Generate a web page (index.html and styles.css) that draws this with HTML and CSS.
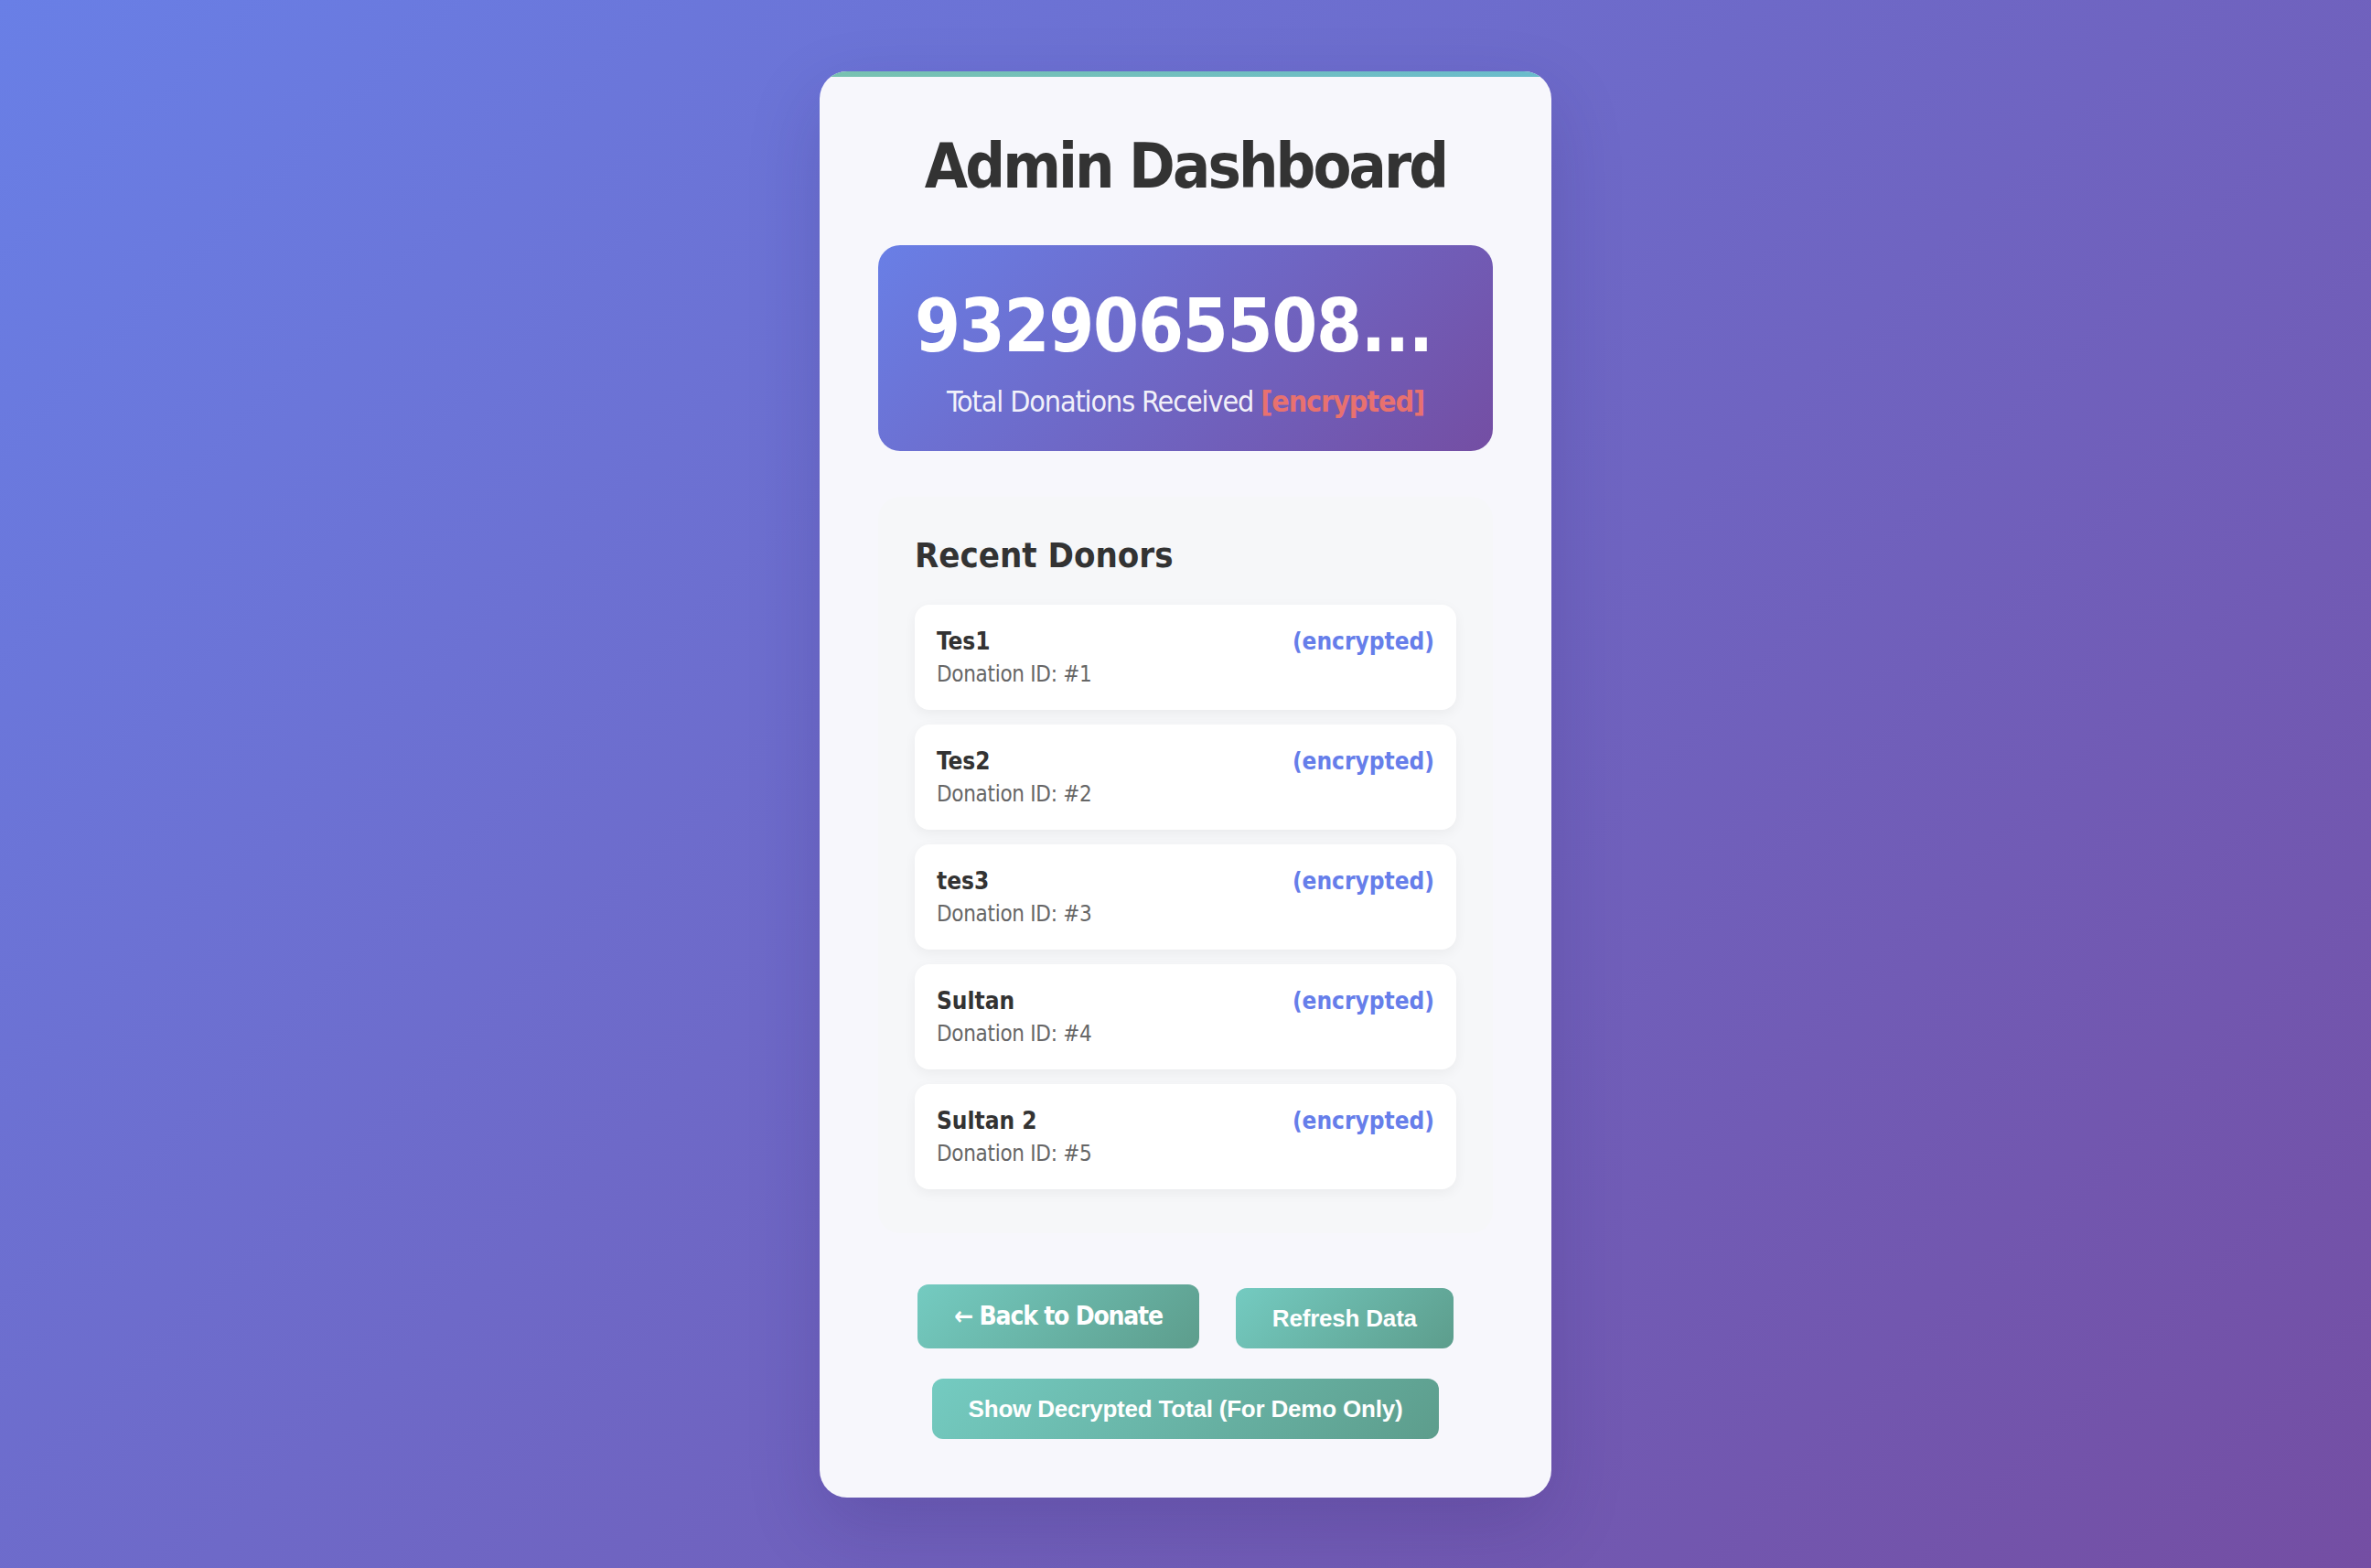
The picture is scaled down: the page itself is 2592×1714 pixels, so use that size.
FILE: index.html
```html
<!DOCTYPE html>
<html lang="en">
<head>
<meta charset="utf-8">
<title>Admin Dashboard</title>
<link rel="stylesheet" href="styles.css">
</head>
<body>
<main class="card">
  <h1 class="title">Admin Dashboard</h1>
  <section class="total">
    <div class="total-value">9329065508...</div>
    <div class="total-label">Total Donations Received <span class="enc">[encrypted]</span></div>
  </section>
  <section class="donors">
    <h3 class="donors-title">Recent Donors</h3>
    <div class="donor">
      <div class="donor-info"><div class="donor-name">Tes1</div><div class="donor-id">Donation ID: #1</div></div>
      <div class="donor-amount">(encrypted)</div>
    </div>
    <div class="donor">
      <div class="donor-info"><div class="donor-name">Tes2</div><div class="donor-id">Donation ID: #2</div></div>
      <div class="donor-amount">(encrypted)</div>
    </div>
    <div class="donor">
      <div class="donor-info"><div class="donor-name">tes3</div><div class="donor-id">Donation ID: #3</div></div>
      <div class="donor-amount">(encrypted)</div>
    </div>
    <div class="donor">
      <div class="donor-info"><div class="donor-name">Sultan</div><div class="donor-id">Donation ID: #4</div></div>
      <div class="donor-amount">(encrypted)</div>
    </div>
    <div class="donor">
      <div class="donor-info"><div class="donor-name">Sultan 2</div><div class="donor-id">Donation ID: #5</div></div>
      <div class="donor-amount">(encrypted)</div>
    </div>
  </section>
  <div class="actions">
    <a class="btn btn-link" href="#">← Back to Donate</a>
    <button class="btn btn-button" type="button">Refresh Data</button>
  </div>
  <div class="actions-second">
    <button class="btn btn-button" type="button">Show Decrypted Total (For Demo Only)</button>
  </div>
</main>
</body>
</html>
```
FILE: styles.css
```css
* { box-sizing: border-box; }
html, body { margin: 0; padding: 0; }
body {
  min-height: 100vh;
  display: flex;
  align-items: center;
  justify-content: center;
  background: linear-gradient(135deg, #697fe6 0%, #744ea3 100%);
  font-family: "DejaVu Sans Condensed", "DejaVu Sans", sans-serif;
  color: #333;
}
.card {
  position: relative;
  overflow: hidden;
  width: 800px;
  padding: 64px;
  background: #f7f7fc;
  border-radius: 30px;
  box-shadow: 0 30px 80px rgba(40, 20, 90, 0.18);
  display: flex;
  flex-direction: column;
}
.card::before {
  content: "";
  position: absolute;
  top: 0; left: 0; right: 0;
  height: 6px;
  background: linear-gradient(90deg, #78c2b0, #6abccc);
}
.title {
  margin: 0 0 46px;
  font-size: 68px;
  line-height: 80px;
  font-weight: bold;
  letter-spacing: -2.9px;
  text-align: center;
  color: #333;
}
.total {
  padding: 44px 40px 36px;
  border-radius: 24px;
  background: linear-gradient(135deg, #697fe6 0%, #744ea3 100%);
  color: #fff;
  text-align: center;
}
.total-value {
  font-size: 80px;
  line-height: 90px;
  font-weight: bold;
  letter-spacing: -1.3px;
  white-space: nowrap;
  text-align: left;
}
.total-label {
  margin-top: 19px;
  font-size: 32px;
  line-height: 36px;
  letter-spacing: -1.1px;
  color: rgba(255, 255, 255, 0.92);
}
.enc { color: #e8716f; font-weight: bold; }
.donors {
  margin-top: 50px;
  padding: 42px 40px 32px;
  border-radius: 24px;
  background: #f6f7f9;
}
.donors-title {
  margin: 0 0 32px;
  font-size: 38px;
  line-height: 44px;
  font-weight: bold;
  color: #333;
}
.donor {
  display: flex;
  justify-content: space-between;
  align-items: flex-start;
  padding: 24px 24px;
  margin-bottom: 16px;
  background: #fff;
  border-radius: 16px;
  box-shadow: 0 4px 14px rgba(0, 0, 0, 0.05);
}
.donor-name {
  font-size: 26px;
  line-height: 32px;
  font-weight: bold;
  color: #333;
}
.donor-id {
  margin-top: 5px;
  font-size: 24px;
  line-height: 30px;
  letter-spacing: -0.3px;
  color: #666;
}
.donor-amount {
  font-size: 26px;
  line-height: 32px;
  font-weight: bold;
  color: #667eea;
}
.actions {
  margin-top: 56px;
  display: flex;
  justify-content: center;
  align-items: flex-end;
  gap: 40px;
}
.actions-second {
  margin-top: 33px;
  display: flex;
  justify-content: center;
}
.btn {
  display: inline-block;
  border: none;
  border-radius: 12px;
  color: #fff;
  font-weight: bold;
  text-decoration: none;
  background: linear-gradient(135deg, #74cbc1 0%, #5d9d8c 100%);
  cursor: pointer;
}
.btn-link {
  padding: 17px 40px;
  font-size: 28px;
  line-height: 36px;
  letter-spacing: -1.2px;
}
.btn-button {
  padding: 18px 40px;
  font-family: "Liberation Sans", Arial, sans-serif;
  font-size: 26px;
  line-height: 30px;
  letter-spacing: -0.2px;
}
```
